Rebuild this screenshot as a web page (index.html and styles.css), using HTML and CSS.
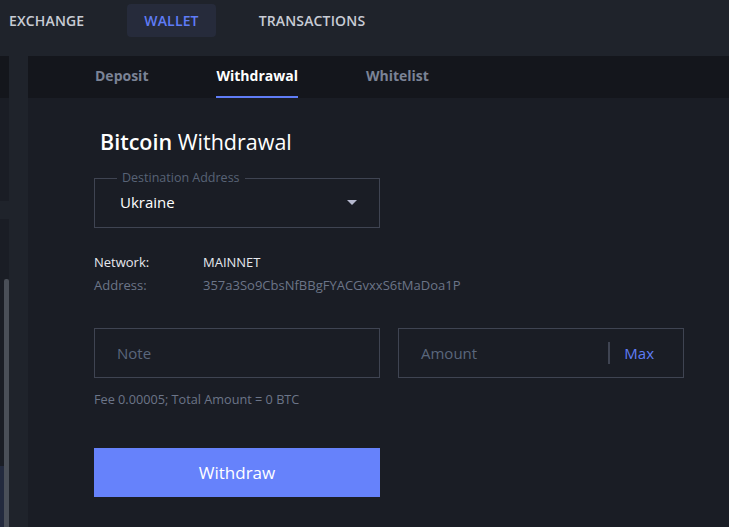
FILE: index.html
```html
<!DOCTYPE html>
<html lang="en">
<head>
  <meta charset="UTF-8" />
  <meta name="viewport" content="width=device-width, initial-scale=1" />
  <title>Wallet - Withdrawal</title>
  <link rel="stylesheet" href="styles.css">
</head>
<body>

  <header class="topbar">
    <a class="nav-tab">EXCHANGE</a>
    <a class="nav-tab active">WALLET</a>
    <a class="nav-tab">TRANSACTIONS</a>
  </header>

  <div class="layout">
    <aside class="side">
      <div class="side-head"></div>
      <div class="side-list"></div>
      <div class="side-sep"></div>
      <div class="side-list tall"></div>
      <div class="side-foot"></div>
      <div class="scrollbar"></div>
    </aside>
    <div class="divider"></div>

    <main class="main">
      <nav class="subtabs">
        <a class="subtab">Deposit</a>
        <a class="subtab active">Withdrawal</a>
        <a class="subtab">Whitelist</a>
      </nav>

      <section class="form">
        <h2 class="title"><b>Bitcoin</b> Withdrawal</h2>

        <fieldset class="select-box">
          <legend>Destination Address</legend>
          <span class="select-value">Ukraine</span>
          <span class="caret"></span>
        </fieldset>

        <dl class="info">
          <dt>Network:</dt>
          <dd>MAINNET</dd>
          <dt class="muted">Address:</dt>
          <dd class="muted">357a3So9CbsNfBBgFYACGvxxS6tMaDoa1P</dd>
        </dl>

        <div class="inputs">
          <div class="field">
            <span class="placeholder">Note</span>
          </div>
          <div class="field">
            <span class="placeholder">Amount</span>
            <span class="field-sep"></span>
            <span class="max">Max</span>
          </div>
        </div>

        <p class="fee">Fee 0.00005; Total Amount = 0 BTC</p>

        <button class="withdraw">Withdraw</button>
      </section>
    </main>
  </div>

</body>
</html>
```

FILE: styles.css
```css
* {
  box-sizing: border-box;
}
html, body {
  margin: 0;
  height: 100%;
}
body {
  background: #1a1d25;
  color: #fff;
  font-family: 'Open Sans', 'Noto Sans', sans-serif;
  overflow: hidden;
}
a {
  text-decoration: none;
  cursor: pointer;
}

/* top navigation */
.topbar {
  height: 56px;
  background: #1f232b;
  display: flex;
  align-items: flex-start;
  padding: 4px 0 0 9px;
}
.nav-tab {
  height: 33px;
  line-height: 33px;
  font-size: 14px;
  font-weight: 600;
  color: #c8ccd5;
  letter-spacing: 0.15px;
}
.nav-tab + .nav-tab {
  margin-left: 43px;
}
.nav-tab.active {
  background: #262b3b;
  color: #5f7cf6;
  border-radius: 4px;
  padding: 0 17px;
}

/* layout */
.layout {
  display: flex;
  height: calc(100% - 56px);
}
.side {
  width: 9px;
  display: flex;
  flex-direction: column;
  position: relative;
}
.side-head {
  height: 42px;
  background: #14161c;
}
.side-list {
  height: 103px;
  background: #1a1d25;
}
.side-list.tall {
  height: 247px;
}
.side-sep {
  height: 18px;
  background: #1f232b;
}
.side-foot {
  flex: 1;
  background: #232a3e;
}
.scrollbar {
  position: absolute;
  left: 4px;
  top: 223px;
  bottom: 0;
  width: 5px;
  background: #4a4f58;
  border-radius: 2px 2px 0 0;
}
.divider {
  width: 19px;
  background: #1f232b;
}
.main {
  flex: 1;
}

/* sub tabs */
.subtabs {
  height: 42px;
  background: #14161c;
  display: flex;
  gap: 68px;
  padding-left: 67px;
}
.subtab {
  font-size: 14px;
  font-weight: 700;
  color: #7b8396;
  line-height: 40px;
  border-bottom: 2px solid transparent;
}
.subtab.active {
  color: #fff;
  border-bottom-color: #5f7cf6;
}

/* form */
.form {
  padding: 29px 0 0 66px;
}
.title {
  margin: 0 0 14px 6px;
  font-size: 21.5px;
  font-weight: 400;
  line-height: 30px;
  color: #fff;
}
.title b {
  font-weight: 600;
}
.select-box {
  width: 286px;
  height: 57px;
  margin: 0;
  border: 1px solid #3f4452;
  padding: 0 22px 0 25px;
  display: flex;
  align-items: center;
  justify-content: space-between;
}
.select-box legend {
  font-size: 12.5px;
  color: #586376;
  padding: 0 5px;
  margin-left: -3px;
  line-height: 14px;
}
.select-value {
  font-size: 15px;
  margin-top: -9px;
}
.caret {
  width: 0;
  height: 0;
  border-left: 5px solid transparent;
  border-right: 5px solid transparent;
  border-top: 5px solid #b6b9cf;
  margin-top: -7px;
}
.info {
  display: grid;
  grid-template-columns: 109px auto;
  row-gap: 6px;
  margin: 26px 0 0 0;
  font-size: 13px;
  line-height: 17px;
}
.info dt, .info dd {
  margin: 0;
  color: #e6e8ee;
}
.info .muted {
  color: #6c7588;
}
.inputs {
  display: flex;
  gap: 18px;
  margin-top: 34px;
}
.field {
  width: 286px;
  height: 50px;
  border: 1px solid #3f4452;
  display: flex;
  align-items: center;
  padding: 0 29px 0 22px;
}
.placeholder {
  font-size: 15px;
  color: #5a677c;
  flex: 1;
}
.field-sep {
  width: 2px;
  height: 22px;
  background: #3f4452;
  margin-right: 14px;
}
.max {
  font-size: 15px;
  color: #5f7cf6;
}
.fee {
  margin: 12px 0 0;
  font-size: 12.7px;
  color: #6c7588;
}
.withdraw {
  margin-top: 40px;
  width: 286px;
  height: 49px;
  border: none;
  background: #6682fb;
  color: #fff;
  font-family: inherit;
  font-size: 17px;
  cursor: pointer;
}
.withdraw:hover {
  background: #5873ee;
}
```
